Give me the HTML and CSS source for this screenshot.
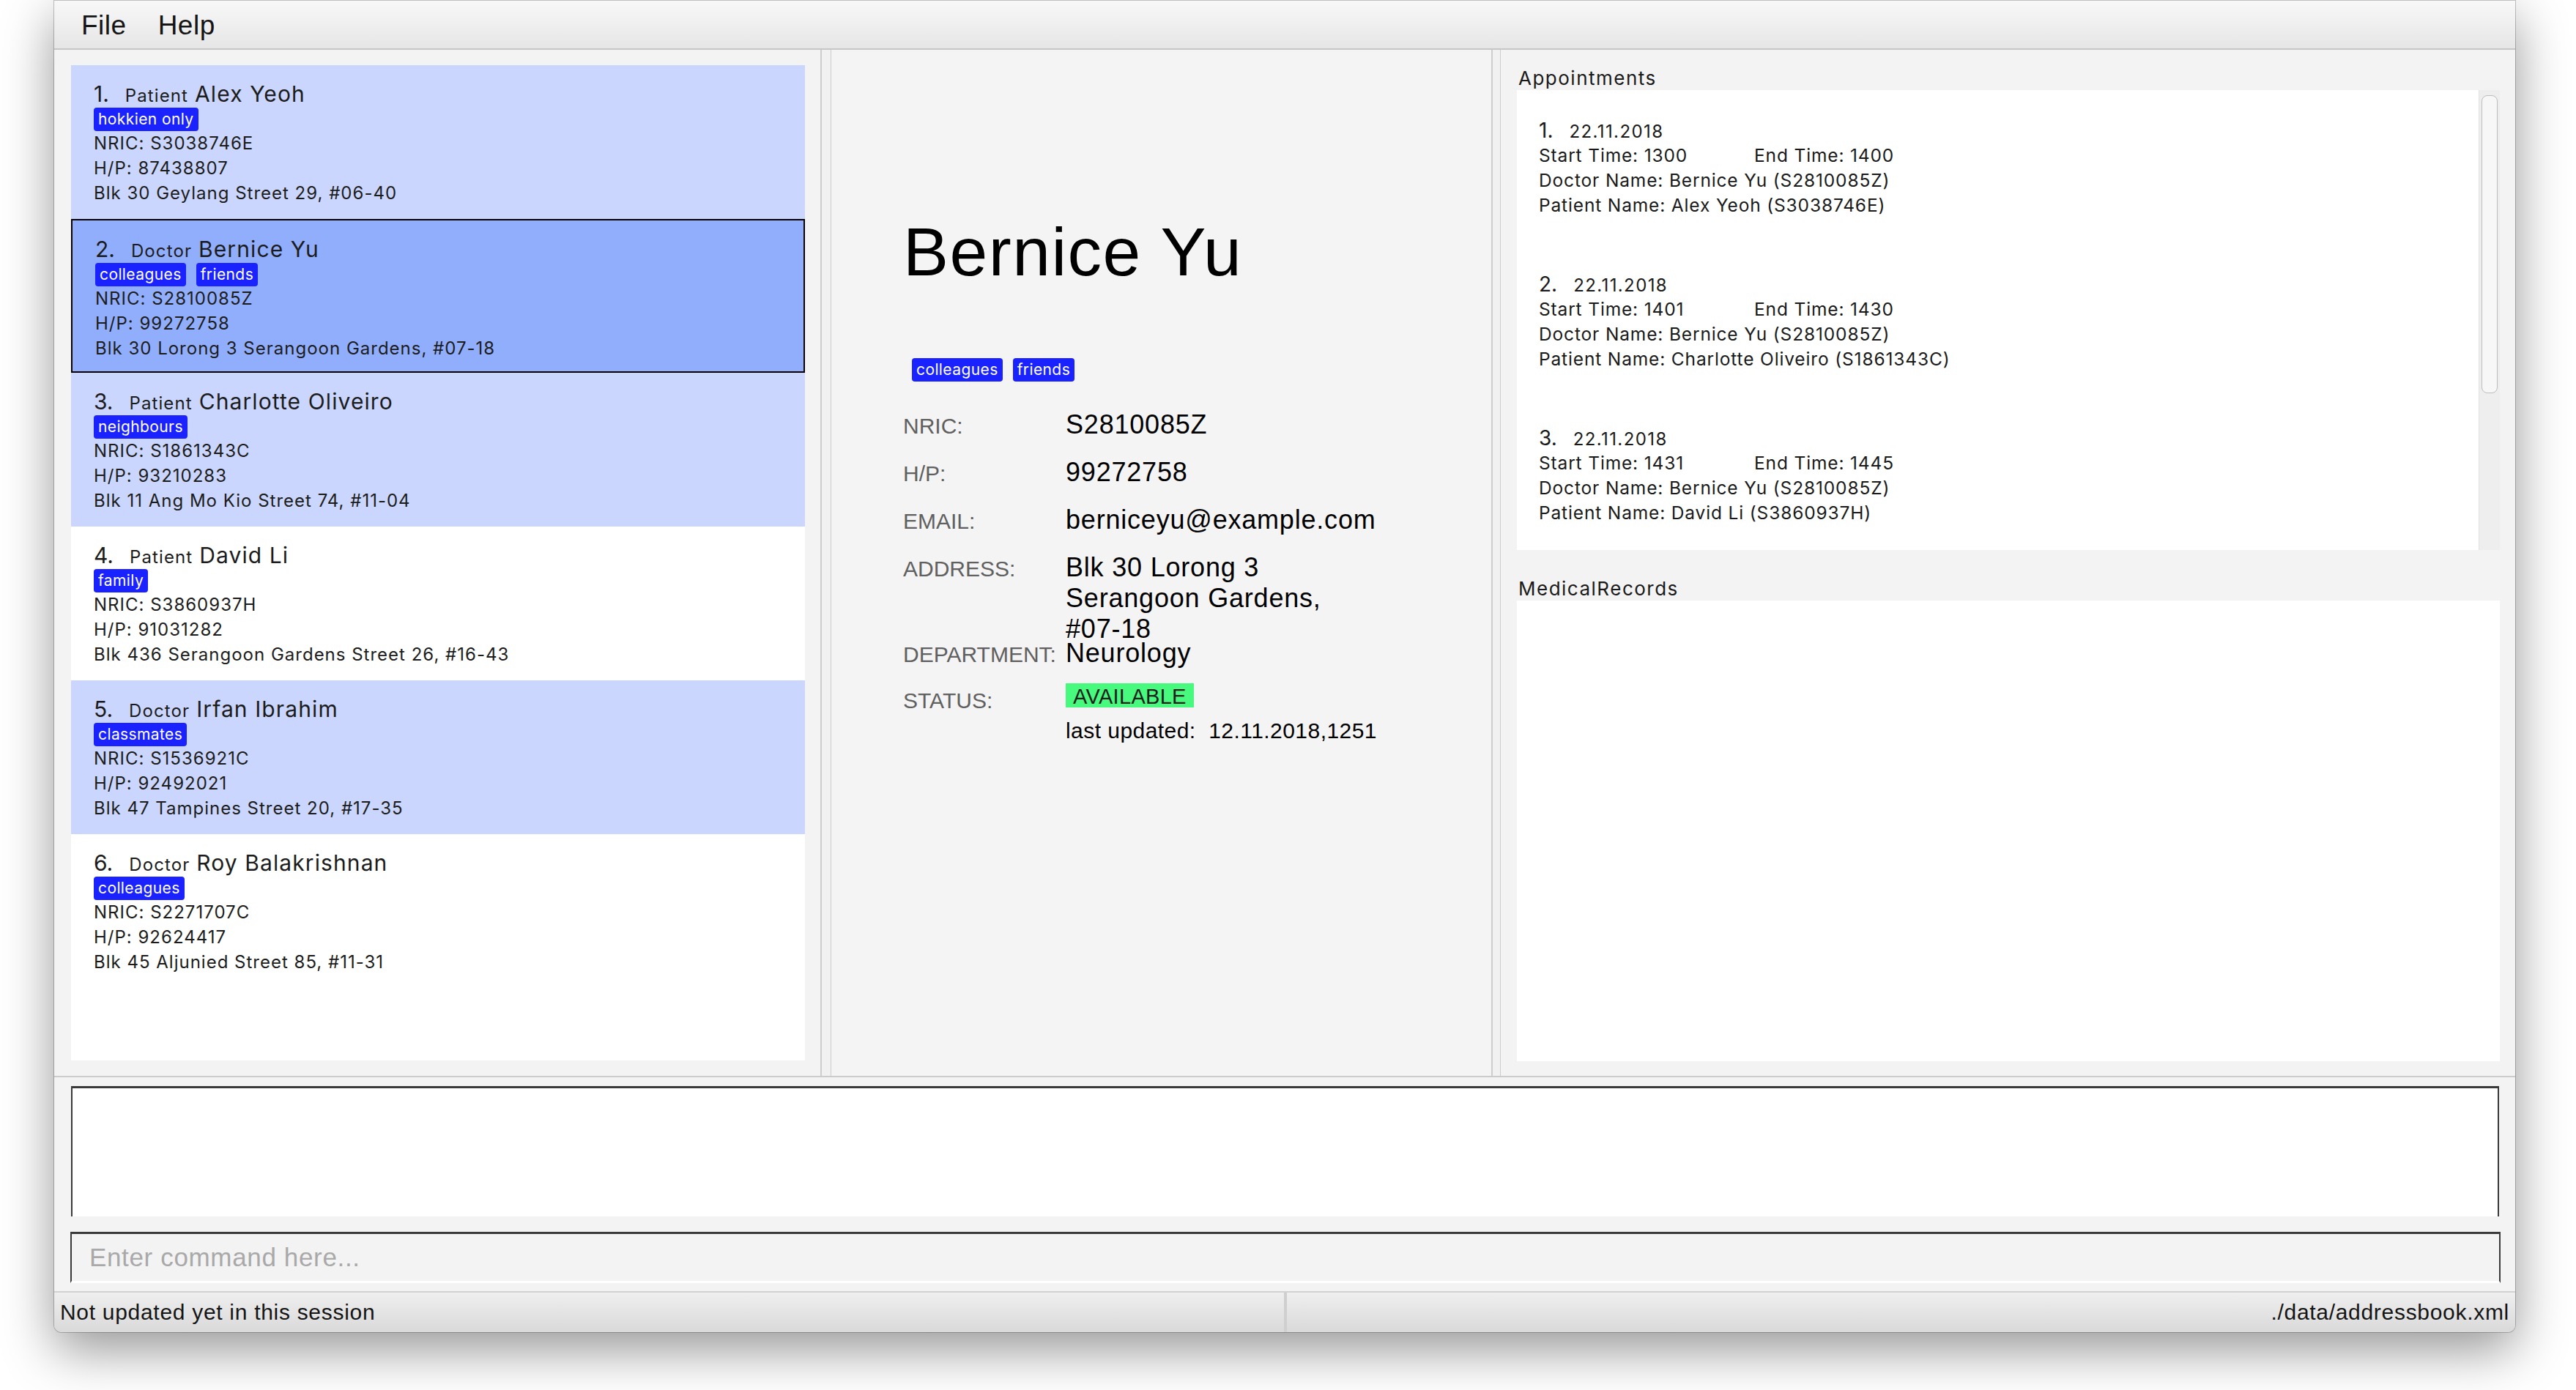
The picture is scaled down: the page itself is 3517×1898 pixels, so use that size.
FILE: index.html
```html
<!DOCTYPE html>
<html>
<head>
<meta charset="utf-8">
<title>Address Book</title>
<link rel="stylesheet" href="styles.css">
</head>
<body>
<div class="window">
  <div class="menubar">
    <span class="menu-item">File</span>
    <span class="menu-item">Help</span>
  </div>
  <div class="main">
    <div class="pane pane-list">
      <div class="person-list">
        <div class="card card-odd">
          <div class="card-title"><span class="idx">1.</span><span class="role">Patient</span><span class="name">Alex Yeoh</span></div>
          <div class="tags"><span class="tag">hokkien only</span></div>
          <div class="line">NRIC: S3038746E</div>
          <div class="line">H/P: 87438807</div>
          <div class="line">Blk 30 Geylang Street 29, #06-40</div>
        </div>
        <div class="card card-selected">
          <div class="card-title"><span class="idx">2.</span><span class="role">Doctor</span><span class="name">Bernice Yu</span></div>
          <div class="tags"><span class="tag">colleagues</span><span class="tag">friends</span></div>
          <div class="line">NRIC: S2810085Z</div>
          <div class="line">H/P: 99272758</div>
          <div class="line">Blk 30 Lorong 3 Serangoon Gardens, #07-18</div>
        </div>
        <div class="card card-odd">
          <div class="card-title"><span class="idx">3.</span><span class="role">Patient</span><span class="name">Charlotte Oliveiro</span></div>
          <div class="tags"><span class="tag">neighbours</span></div>
          <div class="line">NRIC: S1861343C</div>
          <div class="line">H/P: 93210283</div>
          <div class="line">Blk 11 Ang Mo Kio Street 74, #11-04</div>
        </div>
        <div class="card">
          <div class="card-title"><span class="idx">4.</span><span class="role">Patient</span><span class="name">David Li</span></div>
          <div class="tags"><span class="tag">family</span></div>
          <div class="line">NRIC: S3860937H</div>
          <div class="line">H/P: 91031282</div>
          <div class="line">Blk 436 Serangoon Gardens Street 26, #16-43</div>
        </div>
        <div class="card card-odd">
          <div class="card-title"><span class="idx">5.</span><span class="role">Doctor</span><span class="name">Irfan Ibrahim</span></div>
          <div class="tags"><span class="tag">classmates</span></div>
          <div class="line">NRIC: S1536921C</div>
          <div class="line">H/P: 92492021</div>
          <div class="line">Blk 47 Tampines Street 20, #17-35</div>
        </div>
        <div class="card">
          <div class="card-title"><span class="idx">6.</span><span class="role">Doctor</span><span class="name">Roy Balakrishnan</span></div>
          <div class="tags"><span class="tag">colleagues</span></div>
          <div class="line">NRIC: S2271707C</div>
          <div class="line">H/P: 92624417</div>
          <div class="line">Blk 45 Aljunied Street 85, #11-31</div>
        </div>
      </div>
    </div>
    <div class="divider divider-a"></div>
    <div class="pane pane-detail">
      <div class="detail-name">Bernice Yu</div>
      <div class="tags detail-tags"><span class="tag">colleagues</span><span class="tag">friends</span></div>
      <div class="detail-grid">
        <div class="d-label">NRIC:</div><div class="d-value">S2810085Z</div>
        <div class="d-label">H/P:</div><div class="d-value">99272758</div>
        <div class="d-label">EMAIL:</div><div class="d-value">berniceyu@example.com</div>
        <div class="d-label">ADDRESS:</div><div class="d-value d-address">Blk 30 Lorong 3<br>Serangoon Gardens,<br>#07-18</div>
        <div class="d-label">DEPARTMENT:</div><div class="d-value">Neurology</div>
        <div class="d-label d-status-label">STATUS:</div>
        <div class="d-value d-status">
          <span class="badge-available">AVAILABLE</span>
          <span class="last-updated">last updated:&nbsp; 12.11.2018,1251</span>
        </div>
      </div>
    </div>
    <div class="divider divider-b"></div>
    <div class="pane pane-right">
      <div class="section-label">Appointments</div>
      <div class="appt-list">
        <div class="appt-cells">
          <div class="appt card-odd">
            <div class="appt-title"><span class="appt-idx">1.</span><span class="appt-date">22.11.2018</span></div>
            <div class="appt-line"><span class="appt-start">Start Time: 1300</span><span>End Time: 1400</span></div>
            <div class="appt-line">Doctor Name: Bernice Yu (S2810085Z)</div>
            <div class="appt-line">Patient Name: Alex Yeoh (S3038746E)</div>
          </div>
          <div class="appt">
            <div class="appt-title"><span class="appt-idx">2.</span><span class="appt-date">22.11.2018</span></div>
            <div class="appt-line"><span class="appt-start">Start Time: 1401</span><span>End Time: 1430</span></div>
            <div class="appt-line">Doctor Name: Bernice Yu (S2810085Z)</div>
            <div class="appt-line">Patient Name: Charlotte Oliveiro (S1861343C)</div>
          </div>
          <div class="appt card-odd">
            <div class="appt-title"><span class="appt-idx">3.</span><span class="appt-date">22.11.2018</span></div>
            <div class="appt-line"><span class="appt-start">Start Time: 1431</span><span>End Time: 1445</span></div>
            <div class="appt-line">Doctor Name: Bernice Yu (S2810085Z)</div>
            <div class="appt-line">Patient Name: David Li (S3860937H)</div>
          </div>
        </div>
        <div class="scrollbar"><div class="thumb"></div></div>
      </div>
      <div class="section-label records-label">MedicalRecords</div>
      <div class="records-box"></div>
    </div>
  </div>
  <div class="result-box"></div>
  <div class="command-box"><span class="placeholder">Enter command here...</span></div>
  <div class="statusbar">
    <div class="status-left">Not updated yet in this session</div>
    <div class="status-sep"></div>
    <div class="status-right">./data/addressbook.xml</div>
  </div>
</div>
</body>
</html>
```

FILE: styles.css
```css
html, body {
  margin: 0;
  padding: 0;
}
body {
  width: 3517px;
  height: 1898px;
  overflow: hidden;
  background: #ffffff;
  font-family: "Liberation Sans", Arial, sans-serif;
  color: #1a1a1a;
}
.window {
  margin-left: 74px;
  width: 3360px;
  height: 1819px;
  background: #f3f3f3;
  border-radius: 0 0 10px 10px;
  box-shadow: 0 24px 70px rgba(0, 0, 0, 0.42), 0 0 0 1px rgba(0, 0, 0, 0.22);
  display: flex;
  flex-direction: column;
  overflow: hidden;
}

/* menu */
.menubar {
  height: 68px;
  box-sizing: border-box;
  border-top: 1px solid #bfbfbf;
  border-bottom: 2px solid #c6c6c6;
  background: linear-gradient(#f8f8f8, #e6e6e6);
  display: flex;
  align-items: flex-start;
  padding: 15px 0 0 37px;
  gap: 43px;
  font-size: 37px;
  line-height: 37px;
  letter-spacing: 0.5px;
  color: #151515;
}

/* main split */
.main {
  display: flex;
  height: 1403px;
  box-sizing: border-box;
  border-bottom: 2px solid #cbcbcb;
}
.pane {
  box-sizing: border-box;
}
.pane-list {
  width: 1046px;
  padding: 21px 21px 21px 23px;
}
.divider {
  box-sizing: border-box;
  background: #f1f1f1;
  border-left: 2px solid #cdcdcd;
  border-right: 1px solid #cdcdcd;
}
.divider-a { width: 15px; }
.divider-b { width: 13px; }

.person-list {
  height: 100%;
  background: #ffffff;
  overflow: hidden;
  font-family: Inter, "Liberation Sans", sans-serif;
}
.card {
  height: 210px;
  box-sizing: border-box;
  padding: 20px 0 0 31px;
  background: #ffffff;
  color: #1c1c1c;
}
.card-odd {
  background: #cad6fd;
}
.card-selected {
  background: #91aefc;
  border: 2px solid #000000;
  padding: 20px 0 0 31px;
}
.card-title {
  height: 38px;
  line-height: 38px;
  white-space: nowrap;
}
.idx {
  font-size: 30px;
  margin-right: 22px;
}
.role {
  font-size: 24px;
  margin-right: 9px;
  letter-spacing: 1.1px;
}
.name {
  font-size: 30px;
  letter-spacing: 1.1px;
}
.tags {
  display: flex;
  gap: 14px;
  height: 32px;
}
.tag {
  display: inline-block;
  height: 32px;
  line-height: 32px;
  padding: 0 6px;
  background: #1a22ff;
  color: #ffffff;
  border-radius: 4px;
  font-family: Inter, "Liberation Sans", sans-serif;
  font-size: 21px;
  letter-spacing: 0.4px;
}
.line {
  font-size: 24px;
  line-height: 34px;
  letter-spacing: 1px;
  white-space: nowrap;
}

/* detail */
.pane-detail {
  width: 901px;
  padding: 231px 0 0 98px;
  background: #f4f4f4;
}
.detail-name {
  font-size: 93px;
  line-height: 90px;
  letter-spacing: 1.5px;
  color: #000;
  white-space: nowrap;
}
.detail-tags {
  margin: 100px 0 0 12px;
}
.detail-grid {
  margin-top: 38px;
  display: grid;
  grid-template-columns: 222px auto;
  row-gap: 21px;
  align-items: baseline;
}
.d-label {
  font-size: 30px;
  line-height: 42px;
  color: #606060;
  white-space: nowrap;
}
.d-value {
  font-size: 36px;
  line-height: 42px;
  letter-spacing: 0.8px;
  color: #000;
  white-space: nowrap;
}
.d-address {
  margin-bottom: -30px;
}
.d-status-label {
  align-self: start;
}
.d-status {
  align-self: start;
  display: flex;
  flex-direction: column;
  align-items: flex-start;
}
.badge-available {
  display: inline-block;
  margin-top: -3px;
  background: #47f97d;
  color: #1d1d1d;
  font-size: 29px;
  line-height: 30px;
  padding: 3px 10px 0 10px;
  letter-spacing: 0.3px;
}
.last-updated {
  margin-top: 12px;
  font-size: 30px;
  line-height: 40px;
  letter-spacing: 0.45px;
}

/* right pane */
.pane-right {
  width: 1385px;
  padding: 24px 21px 20px 22px;
  display: flex;
  flex-direction: column;
}
.section-label {
  font-family: Inter, "Liberation Sans", sans-serif;
  font-size: 26px;
  line-height: 30px;
  height: 30px;
  padding-left: 2px;
  letter-spacing: 1.5px;
  color: #1a1a1a;
  margin-bottom: 1px;
}
.records-label {
  margin-top: 38px;
}
.appt-list {
  height: 628px;
  display: flex;
  overflow: hidden;
  background: #ffffff;
}
.appt-cells {
  flex: 1;
  overflow: hidden;
  font-family: Inter, "Liberation Sans", sans-serif;
}
.appt {
  height: 210px;
  box-sizing: border-box;
  padding: 38px 0 0 30px;
  background: #ffffff;
}
.appt-title {
  line-height: 34px;
  height: 34px;
  white-space: nowrap;
}
.appt-idx {
  font-size: 28px;
  margin-right: 22px;
}
.appt-date {
  font-size: 24px;
  letter-spacing: 1.4px;
}
.appt-line {
  font-size: 24.5px;
  line-height: 34px;
  letter-spacing: 0.85px;
  white-space: nowrap;
}
.appt-start {
  display: inline-block;
  width: 294px;
}
.scrollbar {
  width: 29px;
  box-sizing: border-box;
  background: #eeeeee;
  border-left: 1px solid #e2e2e2;
  padding: 7px 3px 0 3px;
}
.thumb {
  height: 407px;
  box-sizing: border-box;
  border: 1px solid #bdbdbd;
  border-radius: 8px;
  background: #f7f7f7;
}
.records-box {
  flex: 1;
  background: #ffffff;
}

/* bottom area */
.result-box {
  margin: 12px 22px 0 23px;
  height: 178px;
  box-sizing: border-box;
  background: #ffffff;
  border-top: 3px solid #3a3a3a;
  border-left: 2px solid #3a3a3a;
  border-right: 2px solid #3a3a3a;
}
.command-box {
  margin: 21px 20px 0 22px;
  height: 70px;
  box-sizing: border-box;
  background: #f3f3f3;
  border-top: 3px solid #3a3a3a;
  border-left: 2px solid #3a3a3a;
  border-right: 2px solid #3a3a3a;
  border-bottom: 3px solid #ffffff;
  padding-left: 24px;
  font-size: 35px;
  line-height: 64px;
  letter-spacing: 0.65px;
}
.placeholder {
  color: #a9a9a9;
}
.statusbar {
  margin-top: 11px;
  height: 56px;
  box-sizing: border-box;
  border-top: 2px solid #d2d2d2;
  background: linear-gradient(#efefef, #d9d9d9);
  display: flex;
  font-size: 30px;
  line-height: 54px;
  letter-spacing: 0.7px;
  color: #151515;
}
.status-left {
  width: 1679px;
  box-sizing: border-box;
  padding-left: 8px;
  white-space: nowrap;
}
.status-sep {
  width: 4px;
  background: #cfcfcf;
}
.status-right {
  flex: 1;
  text-align: right;
  padding-right: 8px;
  white-space: nowrap;
}
```
